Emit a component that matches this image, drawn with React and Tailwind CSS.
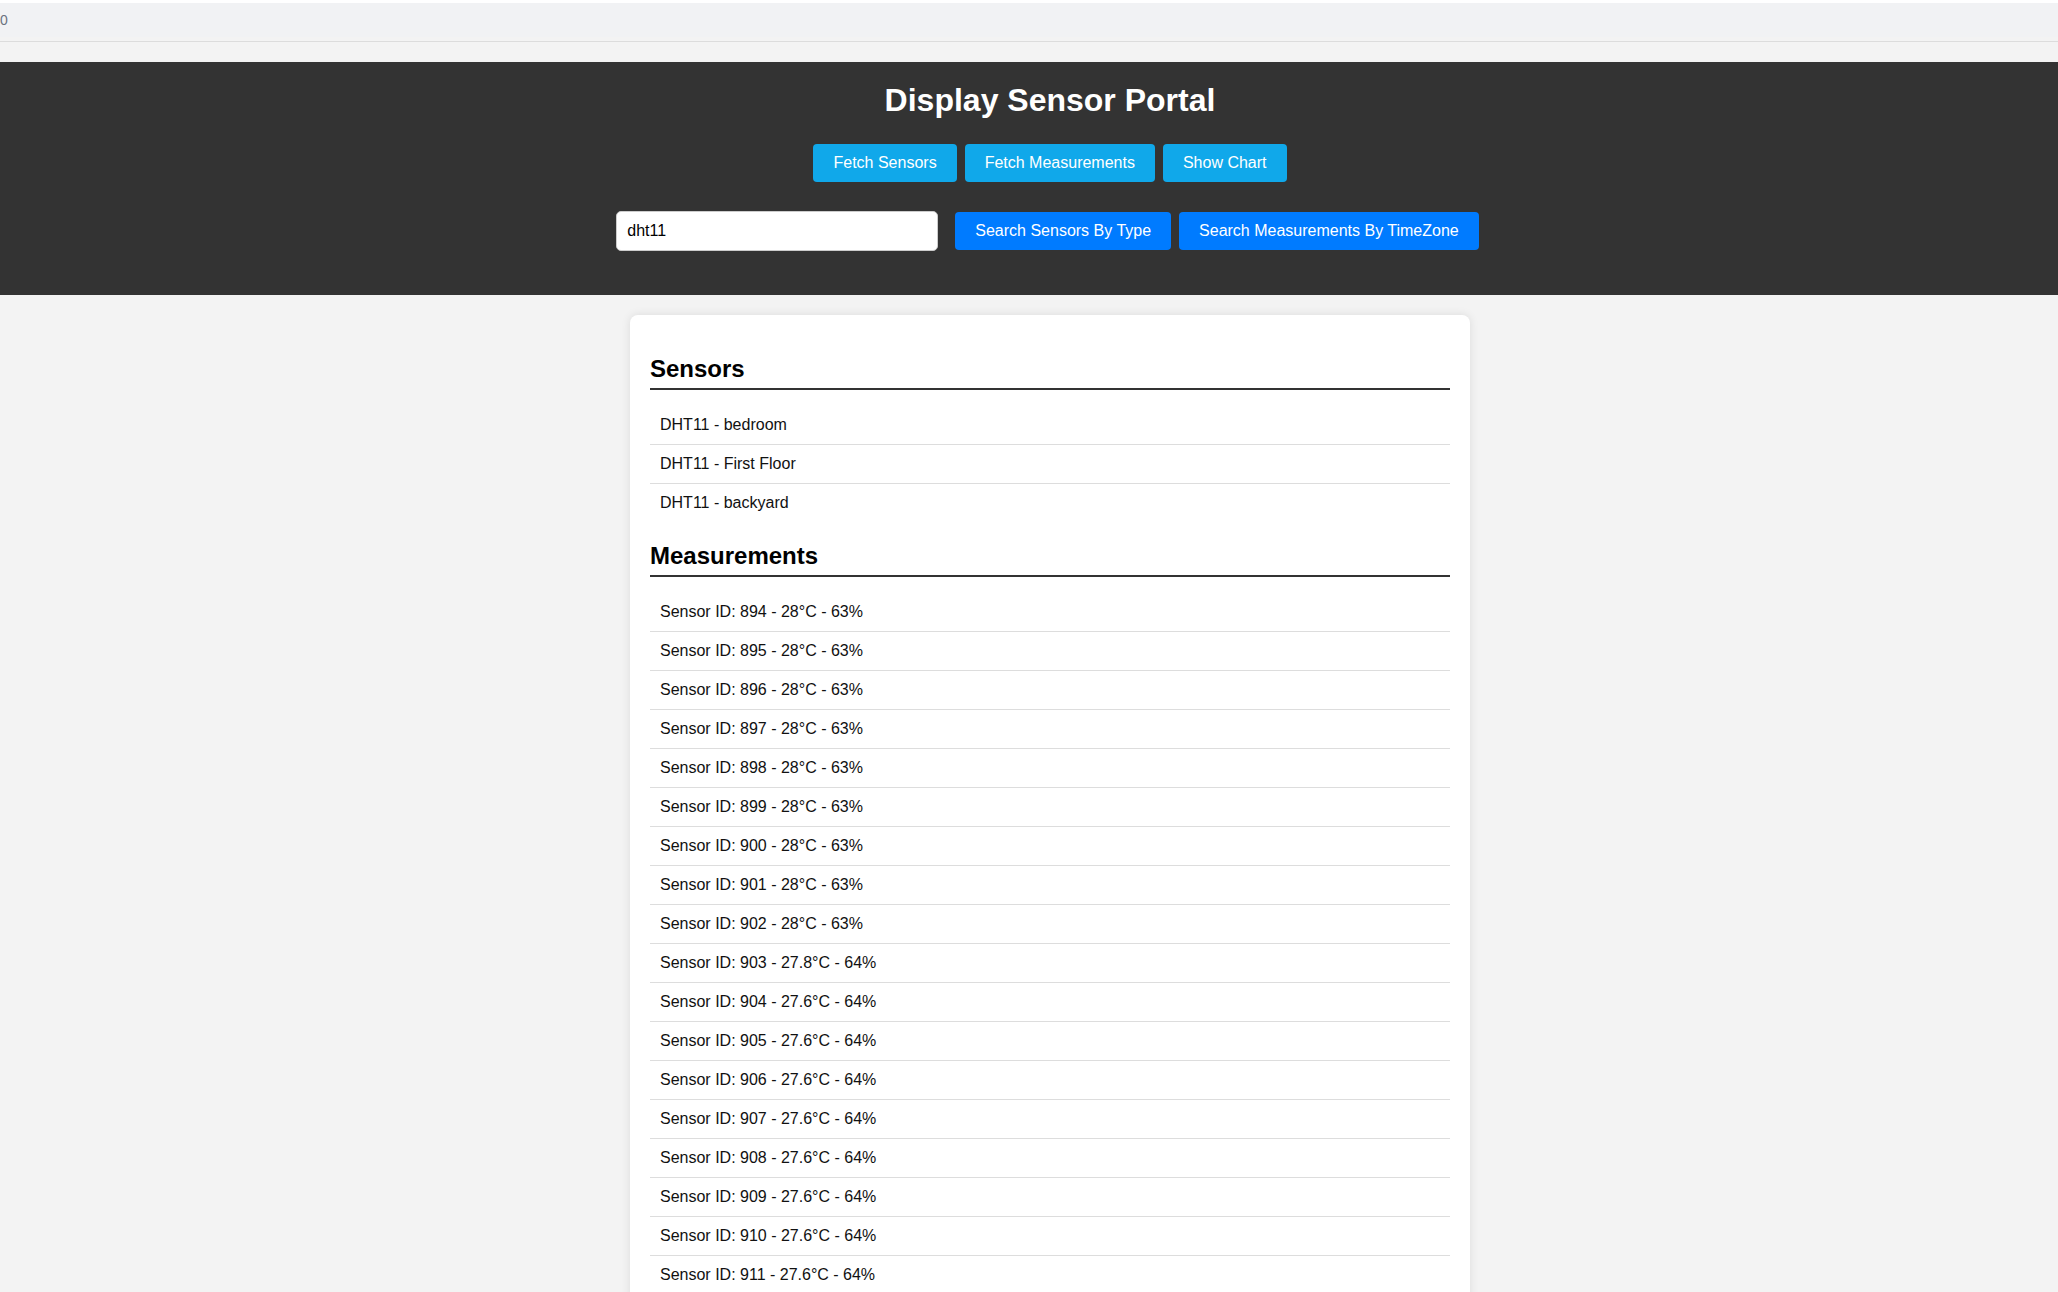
import React, { useState } from "react";

const SENSORS = ["DHT11 - bedroom", "DHT11 - First Floor", "DHT11 - backyard"];

//builds the measurement rows shown in the list (ids 894 onwards)
const buildMeasurements = () => {
  const rows = [];
  for (let id = 894; id <= 916; id++) {
    let temp = "27.6";
    let hum = 64;
    if (id <= 902) {
      temp = "28";
      hum = 63;
    } else if (id === 903) {
      temp = "27.8";
    }
    rows.push({ id, temp, hum });
  }
  return rows;
};

const topButton =
  "h-[38px] px-5 rounded-[4px] bg-[#10a8ea] text-white text-[16px] leading-[18px]";
const searchButton =
  "h-[38px] px-5 rounded-[4px] bg-[#007bff] text-white text-[16px] leading-[18px]";

const Section = ({ title, items }) => (
  <>
    <h2 className="mt-5 mb-4 border-b-2 border-[#333] pb-[5px] text-[24px] font-bold leading-[28px] text-black">
      {title}
    </h2>
    <ul>
      {items.map((item) => (
        <li
          key={item}
          className="border-b border-[#ddd] px-[10px] py-[10px] text-[16px] leading-[18px] text-[#111] last:border-b-0"
        >
          {item}
        </li>
      ))}
    </ul>
  </>
);

const App = () => {
  //search text typed in the input
  const [searchText, setSearchText] = useState("dht11");
  const measurements = buildMeasurements();

  return (
    <div className="min-h-screen bg-[#f3f3f3] font-['Liberation_Sans',Arial,sans-serif]">
      {/* thin strip on top of the page */}
      <div className="h-[3px] bg-white" />
      <div className="h-[34px] bg-[#f1f2f4] text-[14px] leading-[34px] text-[#6b7280]">
        0
      </div>
      <div className="h-1" />
      <div className="h-px bg-[#dcdcdc]" />
      <div className="h-5" />

      <header className="bg-[#333] pl-[42px] pt-5 pb-[44px]">
        <h1 className="text-center text-[32px] font-bold leading-[37px] text-white">
          Display Sensor Portal
        </h1>
        <div className="mt-[25px] flex justify-center gap-2">
          <button className={topButton}>Fetch Sensors</button>
          <button className={topButton}>Fetch Measurements</button>
          <button className={topButton}>Show Chart</button>
        </div>
        <div className="mt-[29px] mr-[5px] flex items-center justify-center">
          <input
            className="h-10 w-[322px] rounded-[5px] border border-[#ccc] bg-white px-[10px] text-[16px] text-black outline-none"
            value={searchText}
            onChange={(e) => setSearchText(e.target.value)}
          />
          <div className="ml-[17px] flex gap-2">
            <button className={searchButton}>Search Sensors By Type</button>
            <button className={searchButton}>
              Search Measurements By TimeZone
            </button>
          </div>
        </div>
      </header>

      <main className="flex justify-center pl-[42px] pt-5">
        <div className="w-[840px] rounded-lg bg-white p-5 shadow-[0_0_10px_rgba(0,0,0,0.1)]">
          <Section title="Sensors" items={SENSORS} />
          <Section
            title="Measurements"
            items={measurements.map(
              (m) => `Sensor ID: ${m.id} - ${m.temp}°C - ${m.hum}%`
            )}
          />
        </div>
      </main>
    </div>
  );
};

export default App;
